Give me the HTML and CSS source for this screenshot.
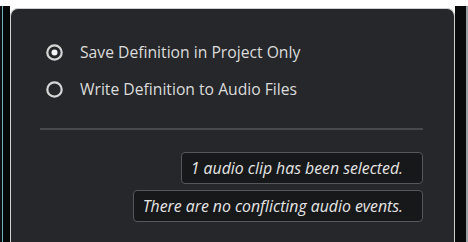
FILE: index.html
```html
<!DOCTYPE html>
<html>
<head>
<meta charset="utf-8">
<link rel="stylesheet" href="styles.css">
</head>
<body>
<div class="screen">
  <div class="edge-left"></div>
  <div class="dialog">
    <div class="options">
      <div class="radio">
        <svg class="radio-icon" width="17" height="17" viewBox="0 0 17 17"><circle cx="8.5" cy="8.5" r="7.2" fill="none" stroke="#d6d6d6" stroke-width="2.2"/><circle cx="8.5" cy="8.5" r="3" fill="#f4f4f4"/></svg>
        <span>Save Definition in Project Only</span>
      </div>
      <div class="radio">
        <svg class="radio-icon" width="17" height="17" viewBox="0 0 17 17"><circle cx="8.5" cy="8.5" r="7.2" fill="none" stroke="#d6d6d6" stroke-width="2.2"/></svg>
        <span>Write Definition to Audio Files</span>
      </div>
    </div>
    <div class="sep"></div>
    <div class="messages">
      <div class="msg">1 audio clip has been selected.</div>
      <div class="msg">There are no conflicting audio events.</div>
    </div>
  </div>
  <div class="edge-right"></div>
</div>
</body>
</html>
```
FILE: styles.css
```css
html, body {
  margin: 0;
  padding: 0;
  background: #ffffff;
}
.screen {
  width: 468px;
  height: 242px;
  overflow: hidden;
  display: flex;
  padding-top: 6px;
  box-sizing: border-box;
  background: #ffffff;
  font-family: "Open Sans", "Noto Sans", sans-serif;
}
.edge-left {
  width: 10px;
  flex: none;
  background: linear-gradient(to right, #0b0d0f 0 2px, #6fb3bc 2px 3px, #060708 3px);
}
.edge-right {
  width: 13px;
  flex: none;
  background: linear-gradient(to right, #080a0c 0 11px, #9aa3a8 11px);
}
.dialog {
  flex: 1;
  margin-top: 2px;
  border: 1px solid #cfcfcf;
  border-bottom: none;
  border-radius: 8px 8px 0 0;
  background: #25272a;
  padding: 31px 31px 0 29px;
}
.options {
  display: flex;
  flex-direction: column;
  gap: 13px;
  padding-left: 6px;
}
.radio {
  display: flex;
  align-items: center;
  gap: 17px;
  height: 24px;
  color: #dcdcdc;
  font-size: 15.7px;
}
.radio-icon {
  flex: none;
}
.sep {
  height: 2px;
  background: #47494c;
  margin-top: 27px;
}
.messages {
  display: flex;
  flex-direction: column;
  align-items: flex-end;
  gap: 6px;
  margin-top: 22px;
}
.msg {
  height: 32px;
  box-sizing: border-box;
  display: flex;
  align-items: center;
  padding: 0 19px 0 9px;
  border: 1px solid #55575a;
  border-radius: 4px;
  background: #17181a;
  color: #e6e6e6;
  font-style: italic;
  font-size: 15.8px;
}
```
